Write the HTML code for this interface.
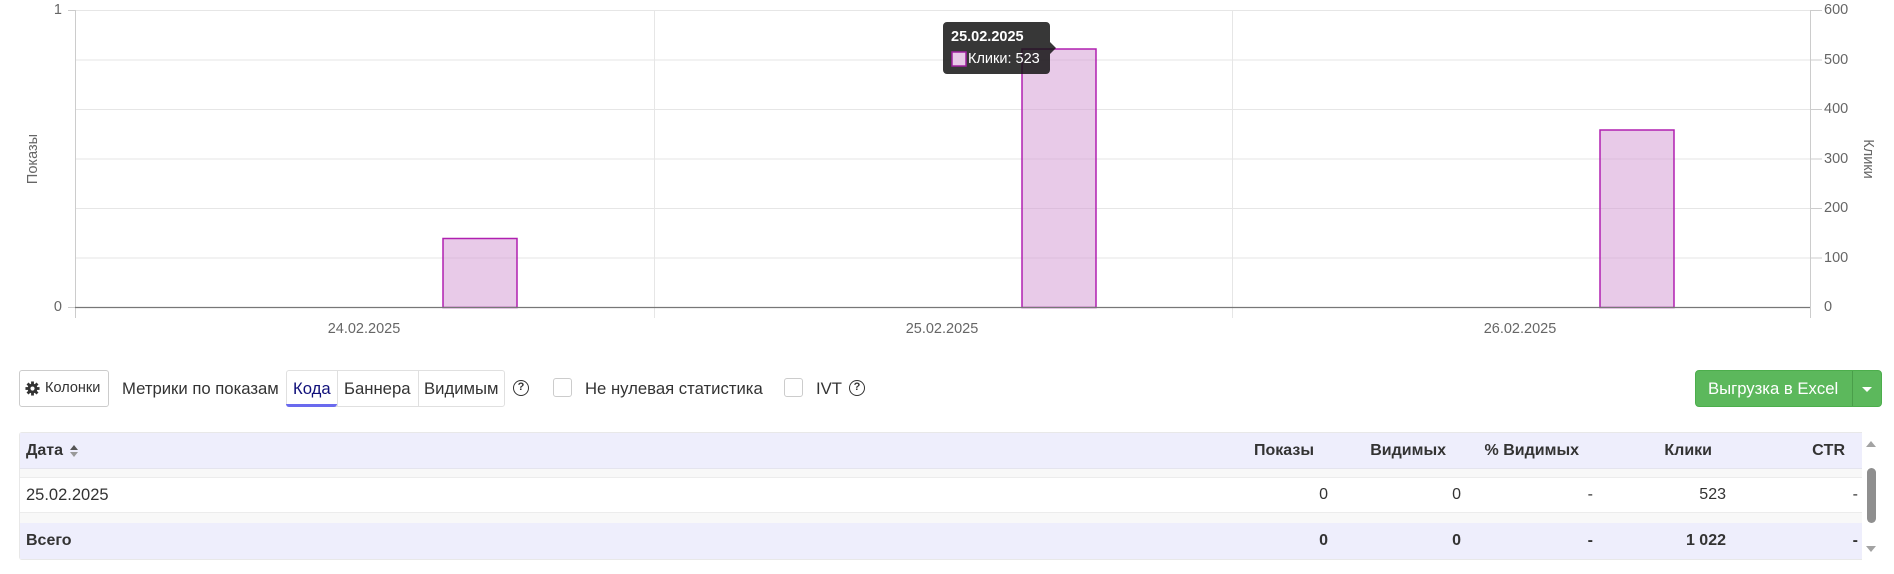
<!DOCTYPE html>
<html><head><meta charset="utf-8"><style>
*{box-sizing:border-box;margin:0;padding:0}
body{width:1894px;height:574px;background:#fff;font-family:"Liberation Sans",Arial,sans-serif;color:#333;position:relative;overflow:hidden}
.a{position:absolute}
.btn{border:1px solid #ccc;border-radius:3px;background:#fff}
.cb{width:19px;height:19px;border:1px solid #ccc;border-radius:3px;background:#fff}
.q{width:16px;height:16px;border:1.6px solid #333;border-radius:50%;font-size:11px;font-weight:bold;text-align:center;line-height:13px}
.th{font-weight:bold;font-size:16px;color:#333}
.num{font-size:16px;text-align:right}
.lb{font-size:16.7px}
</style></head><body>
<svg class="a" style="left:0;top:0" width="1894" height="345">
<g stroke="#e6e6e6" stroke-width="1">
<line x1="75" y1="10.5" x2="1810" y2="10.5"/>
<line x1="75" y1="60" x2="1810" y2="60"/>
<line x1="75" y1="109.5" x2="1810" y2="109.5"/>
<line x1="75" y1="159" x2="1810" y2="159"/>
<line x1="75" y1="208.5" x2="1810" y2="208.5"/>
<line x1="75" y1="258" x2="1810" y2="258"/>
<line x1="654.5" y1="10" x2="654.5" y2="318"/>
<line x1="1232.5" y1="10" x2="1232.5" y2="318"/>
</g>
<line x1="75.5" y1="10" x2="75.5" y2="318" stroke="#ccc"/>
<line x1="1810.5" y1="10" x2="1810.5" y2="318" stroke="#ccc"/>
<line x1="68" y1="10.5" x2="75" y2="10.5" stroke="#ccc"/>
<line x1="68" y1="307.5" x2="75" y2="307.5" stroke="#ccc"/>
<g stroke="#ccc"><line x1="1810" y1="10.5" x2="1822" y2="10.5"/><line x1="1810" y1="60" x2="1822" y2="60"/><line x1="1810" y1="109.5" x2="1822" y2="109.5"/><line x1="1810" y1="159" x2="1822" y2="159"/><line x1="1810" y1="208.5" x2="1822" y2="208.5"/><line x1="1810" y1="258" x2="1822" y2="258"/></g>
<g fill="rgba(210,150,210,0.5)" stroke="#b020b0" stroke-width="1.5">
<rect x="443" y="238.5" width="74" height="69"/>
<rect x="1022" y="49" width="74" height="258.5"/>
<rect x="1600" y="130" width="74" height="177.5"/>
</g>
<line x1="75" y1="307.5" x2="1810" y2="307.5" stroke="#777" stroke-width="1.2"/>
<g font-family="Liberation Sans,Arial,sans-serif" font-size="14.5" fill="#666">
<text x="62" y="14" text-anchor="end">1</text>
<text x="62" y="311" text-anchor="end">0</text>
<text x="364" y="333" text-anchor="middle">24.02.2025</text>
<text x="942" y="333" text-anchor="middle">25.02.2025</text>
<text x="1520" y="333" text-anchor="middle">26.02.2025</text>
<text x="1824" y="14">600</text><text x="1824" y="64">500</text><text x="1824" y="113">400</text><text x="1824" y="163">300</text><text x="1824" y="212">200</text><text x="1824" y="262">100</text><text x="1824" y="311">0</text>
<text transform="translate(37,159) rotate(-90)" text-anchor="middle">Показы</text>
<text transform="translate(1864,159) rotate(90)" text-anchor="middle">Клики</text>
</g>
<path d="M947 22 H1046 a4 4 0 0 1 4 4 V42 L1056 48 L1050 54 V70 a4 4 0 0 1 -4 4 H947 a4 4 0 0 1 -4 -4 V26 a4 4 0 0 1 4 -4Z" fill="rgba(20,20,20,0.85)"/>
<text x="951" y="41" font-family="Liberation Sans,Arial,sans-serif" font-size="14.5" font-weight="bold" fill="#fff">25.02.2025</text>
<rect x="952" y="52" width="14" height="14" fill="#e8c8e8" stroke="#a020a0" stroke-width="1.5"/>
<text x="968" y="63" font-family="Liberation Sans,Arial,sans-serif" font-size="14.5" fill="#fff">Клики: 523</text>
</svg>

<div class="a btn" style="left:19px;top:370px;width:90px;height:37px;font-size:14.5px;line-height:35px;padding-left:25px">Колонки</div>
<svg class="a" style="left:25px;top:381px" width="15" height="15" viewBox="0 0 16 16"><g fill="#333"><circle cx="8" cy="8" r="5.2"/><g id="t"><rect x="6.5" y="0.5" width="3" height="15"/></g><rect x="0.5" y="6.5" width="15" height="3"/><rect x="6.5" y="0.5" width="3" height="15" transform="rotate(45 8 8)"/><rect x="6.5" y="0.5" width="3" height="15" transform="rotate(-45 8 8)"/></g><circle cx="8" cy="8" r="2.2" fill="#fff"/></svg>
<div class="a lb" style="left:122px;top:379px">Метрики по показам</div>
<div class="a" style="left:286px;top:370px;width:219px;height:37px;border:1px solid #e0e0e0;border-radius:3px"></div>
<div class="a" style="left:286px;top:370px;width:51px;height:37px;border-bottom:3px solid #6a6aee;border-radius:0 0 3px 3px"></div>
<div class="a" style="left:337px;top:370px;width:1px;height:37px;background:#e0e0e0"></div>
<div class="a" style="left:418px;top:370px;width:1px;height:37px;background:#e0e0e0"></div>
<div class="a lb" style="left:293px;top:379px;color:#10107a">Кода</div>
<div class="a lb" style="left:344px;top:379px">Баннера</div>
<div class="a lb" style="left:424px;top:379px">Видимым</div>
<div class="a q" style="left:513px;top:380px">?</div>
<div class="a cb" style="left:553px;top:378px"></div>
<div class="a lb" style="left:585px;top:379px">Не нулевая статистика</div>
<div class="a cb" style="left:784px;top:378px"></div>
<div class="a lb" style="left:816px;top:379px">IVT</div>
<div class="a q" style="left:849px;top:380px">?</div>

<div class="a" style="left:1695px;top:370px;width:187px;height:37px;background:#5cb85c;border-radius:4px;border:1px solid #4cae4c"></div>
<div class="a" style="left:1852px;top:371px;width:1px;height:35px;background:#4a9e4a"></div>
<div class="a lb" style="left:1708px;top:379px;color:#fff">Выгрузка в Excel</div>
<div class="a" style="left:1862px;top:387px;border-left:5px solid transparent;border-right:5px solid transparent;border-top:5px solid #fff"></div>

<div class="a" style="left:19px;top:432px;width:1843px;height:128px;border:1px solid #e8e8e8;border-right:none;background:#f8f8f8;border-radius:3px 0 0 3px"></div>
<div class="a" style="left:20px;top:433px;width:1842px;height:36px;background:#eeeefc;border-bottom:1px solid #e4e4ee"></div>
<div class="a" style="left:20px;top:477px;width:1842px;height:36px;background:#fff;border-top:1px solid #ececec;border-bottom:1px solid #ececec"></div>
<div class="a" style="left:20px;top:523px;width:1842px;height:36px;background:#eeeefc"></div>
<div class="a th" style="left:26px;top:442px">Дата</div>
<svg class="a" style="left:69px;top:443px" width="10" height="16"><path d="M1 7 L5 2 L9 7Z" fill="#555"/><path d="M1 9 L5 14 L9 9Z" fill="#999"/></svg>
<div class="a th num" style="right:580px;top:442px">Показы</div>
<div class="a th num" style="right:448px;top:442px">Видимых</div>
<div class="a th num" style="right:315px;top:442px">% Видимых</div>
<div class="a th num" style="right:182px;top:442px">Клики</div>
<div class="a th num" style="right:49px;top:442px">CTR</div>
<div class="a" style="left:26px;top:486px;font-size:16.5px">25.02.2025</div>
<div class="a num" style="right:566px;top:486px">0</div>
<div class="a num" style="right:433px;top:486px">0</div>
<div class="a num" style="right:301px;top:486px">-</div>
<div class="a num" style="right:168px;top:486px">523</div>
<div class="a num" style="right:36px;top:486px">-</div>
<div class="a th" style="left:26px;top:532px">Всего</div>
<div class="a th num" style="right:566px;top:532px">0</div>
<div class="a th num" style="right:433px;top:532px">0</div>
<div class="a th num" style="right:301px;top:532px">-</div>
<div class="a th num" style="right:168px;top:532px">1 022</div>
<div class="a th num" style="right:36px;top:532px">-</div>

<div class="a" style="left:1862px;top:432px;width:19px;height:128px;background:#fff"></div>
<div class="a" style="left:1866px;top:441px;border-left:5px solid transparent;border-right:5px solid transparent;border-bottom:6px solid #a3a3a3"></div>
<div class="a" style="left:1867px;top:468px;width:9px;height:55px;background:#8f8f8f;border-radius:5px"></div>
<div class="a" style="left:1866px;top:546px;border-left:5px solid transparent;border-right:5px solid transparent;border-top:6px solid #a3a3a3"></div>
</body></html>
